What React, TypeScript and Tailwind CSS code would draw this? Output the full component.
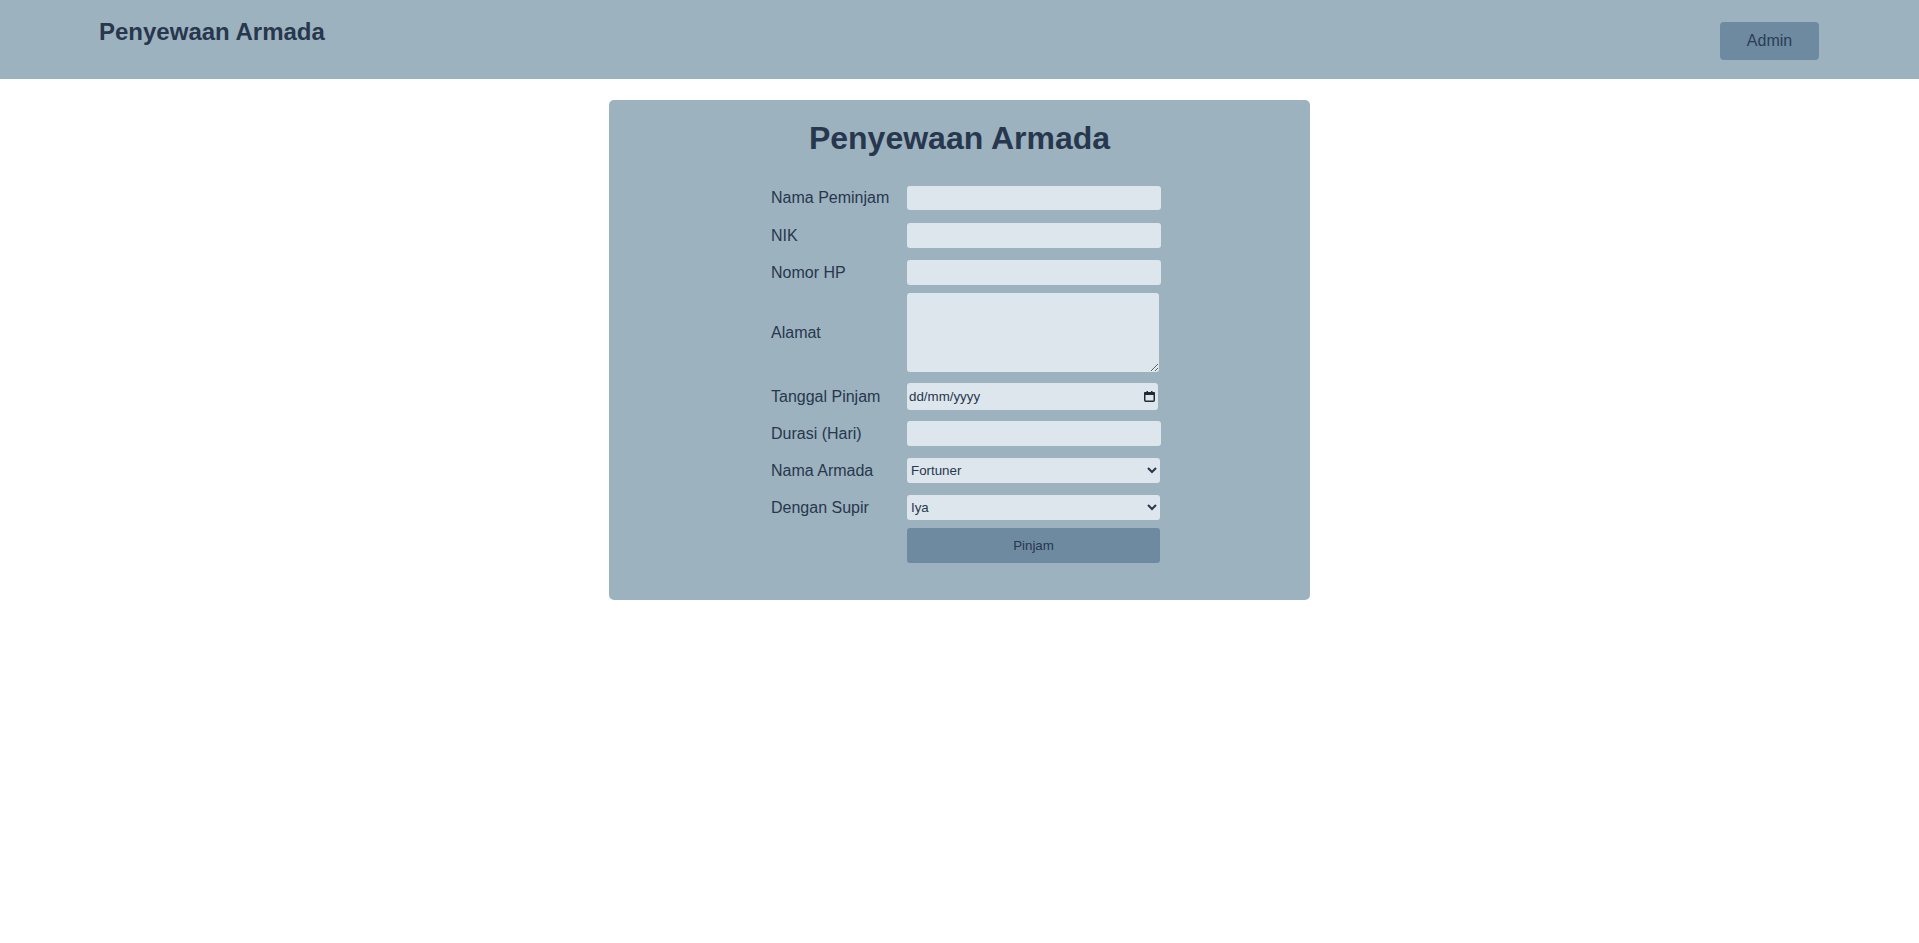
import React from "react";

interface Field {
    label: string;
    mt: string;
    control: React.ReactNode;
}

const inputCls = "block bg-[#dde6ed] rounded-[3px] text-[13.33px] text-[#27374D] outline-none";

// chromium shows the date mask in the system locale, so draw the dd/mm/yyyy field by hand
const DateField: React.FC = () => (
    <div className="relative">
        <input
            type="text"
            placeholder="dd/mm/yyyy"
            className={`${inputCls} w-[251px] h-[27px] px-[2px] placeholder:text-[#27374D]`}
        />
        <svg
            className="absolute right-[3px] top-[8px] pointer-events-none"
            width="11"
            height="11"
            viewBox="0 0 11 11"
            fill="none"
        >
            <rect x="0.75" y="1.75" width="9.5" height="8.5" rx="1" stroke="#1f2a36" strokeWidth="1.5"/>
            <rect x="0" y="1" width="11" height="3" rx="1" fill="#1f2a36"/>
            <rect x="2.5" y="0" width="1.5" height="2" fill="#1f2a36"/>
            <rect x="7" y="0" width="1.5" height="2" fill="#1f2a36"/>
        </svg>
    </div>
);

export default function App() {
    const fields: Field[] = [
        {label: "Nama Peminjam", mt: "mt-0", control: <input type="text" className={`${inputCls} w-[254px] h-[24px] px-[2px]`}/>},
        {label: "NIK", mt: "mt-[13px]", control: <input type="text" className={`${inputCls} w-[254px] h-[25px] px-[2px]`}/>},
        {label: "Nomor HP", mt: "mt-[12px]", control: <input type="text" className={`${inputCls} w-[254px] h-[25px] px-[2px]`}/>},
        {label: "Alamat", mt: "mt-[8px]", control: <textarea className={`${inputCls} w-[252px] h-[79px] px-[2px]`}/>},
        {label: "Tanggal Pinjam", mt: "mt-[11px]", control: <DateField/>},
        {label: "Durasi (Hari)", mt: "mt-[11px]", control: <input type="text" className={`${inputCls} w-[254px] h-[25px] px-[2px]`}/>},
        {
            label: "Nama Armada", mt: "mt-[12px]", control: (
                <select defaultValue="Fortuner" className={`${inputCls} w-[253px] h-[25px]`}>
                    <option>Fortuner</option>
                    <option>Innova</option>
                    <option>Avanza</option>
                </select>
            )
        },
        {
            label: "Dengan Supir", mt: "mt-[12px]", control: (
                <select defaultValue="Iya" className={`${inputCls} w-[253px] h-[25px]`}>
                    <option>Iya</option>
                    <option>Tidak</option>
                </select>
            )
        },
    ];

    return (
        <div className="min-h-[943px] bg-white text-[#27374D]" style={{fontFamily: '"Liberation Sans", Arial, sans-serif'}}>
            <header className="h-[79px] bg-[#9db2bf] flex justify-between items-start pl-[99px] pr-[100px]">
                <h1 className="pt-[16px] text-2xl leading-[32px] font-bold">Penyewaan Armada</h1>
                <button className="mt-[22px] w-[99px] h-[38px] bg-[#6d8aa1] rounded-[4px] text-base text-[#2c3d55]">
                    Admin
                </button>
            </header>

            <main className="flex justify-center pt-[21px]">
                <div className="w-[701px] h-[500px] bg-[#9db2bf] rounded-[5px] pt-[18px]">
                    <h2 className="text-center text-[32px] leading-[40px] font-bold">Penyewaan Armada</h2>
                    <form className="mt-[28px] ml-[162px]" onSubmit={(e) => e.preventDefault()}>
                        {fields.map((field, index) => (
                            <div key={index} className={`flex items-center ${field.mt}`}>
                                <label className="w-[136px] text-base">{field.label}</label>
                                {field.control}
                            </div>
                        ))}
                        <div className="flex mt-[8px]">
                            <div className="w-[136px]"></div>
                            <button type="submit" className="w-[253px] h-[35px] bg-[#6d8aa1] rounded-[3px] text-[13.33px] text-[#27374D]">
                                Pinjam
                            </button>
                        </div>
                    </form>
                </div>
            </main>
        </div>
    );
}
